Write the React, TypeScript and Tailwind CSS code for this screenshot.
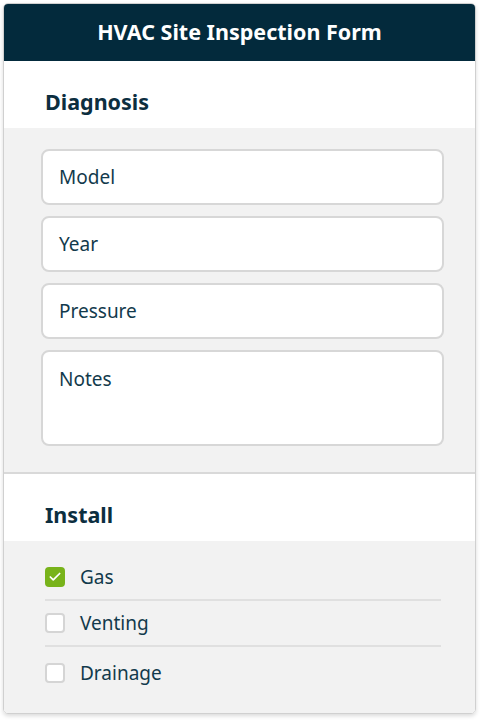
import { Check } from "lucide-react";

const FIELDS = [
  { label: "Model", tall: false },
  { label: "Year", tall: false },
  { label: "Pressure", tall: false },
  { label: "Notes", tall: true },
];

const CHECKS = [
  { label: "Gas", checked: true },
  { label: "Venting", checked: false },
  { label: "Drainage", checked: false },
];

function SectionTitle({ children }: { children: string }) {
  return (
    <div className="bg-white pl-[41px] pt-[27px] pb-[12px]">
      <h2 className="text-[21.5px] font-bold leading-[28px] text-[#0c2e3f]">{children}</h2>
    </div>
  );
}

function Field({ label, tall }: { label: string; tall: boolean }) {
  return (
    <div
      className={`rounded-[8px] border-2 border-[#d7d7d7] bg-white px-[16px] ${
        tall ? "h-[96px] pt-[14px]" : "flex h-[56px] items-center"
      }`}
    >
      <span className="text-[19px] leading-[26px] text-[#123a4c]">{label}</span>
    </div>
  );
}

function CheckRow({ label, checked, last }: { label: string; checked: boolean; last: boolean }) {
  return (
    <div className={`flex items-center ${last ? "h-[52px]" : "h-[46px] border-b-2 border-[#e0e0e0]"}`}>
      {checked ? (
        <span className="flex h-[20px] w-[20px] items-center justify-center rounded-[4px] bg-[#78b31a]">
          <Check size={14} strokeWidth={3} className="text-white" />
        </span>
      ) : (
        <span className="h-[20px] w-[20px] rounded-[4px] border-2 border-[#d5d5d5] bg-white" />
      )}
      <span className="ml-[15px] text-[19px] leading-[26px] text-[#123a4c]">{label}</span>
    </div>
  );
}

export default function App() {
  return (
    <div className="min-h-[720px] bg-white pl-[3px] pt-[3px] font-['Noto_Sans',sans-serif]">
      <div className="w-[473px] overflow-hidden rounded-[5px] border border-[#d0d0d0] shadow-[0_2px_4px_rgba(0,0,0,0.15)]">
        <div className="flex h-[57px] items-center justify-center bg-[#032a3c]">
          <h1 className="text-[21.5px] font-bold text-white">HVAC Site Inspection Form</h1>
        </div>

        <SectionTitle>Diagnosis</SectionTitle>
        <div className="flex flex-col gap-[11px] bg-[#f2f2f2] pl-[37px] pr-[31px] pt-[21px] pb-[26px]">
          {FIELDS.map((f) => (
            <Field key={f.label} label={f.label} tall={f.tall} />
          ))}
        </div>

        <div className="border-t-2 border-[#d9d9d9]">
          <SectionTitle>Install</SectionTitle>
        </div>
        <div className="bg-[#f2f2f2] pl-[41px] pr-[34px] pt-[14px] pb-[14px]">
          {CHECKS.map((c, i) => (
            <CheckRow key={c.label} label={c.label} checked={c.checked} last={i === CHECKS.length - 1} />
          ))}
        </div>
      </div>
    </div>
  );
}
